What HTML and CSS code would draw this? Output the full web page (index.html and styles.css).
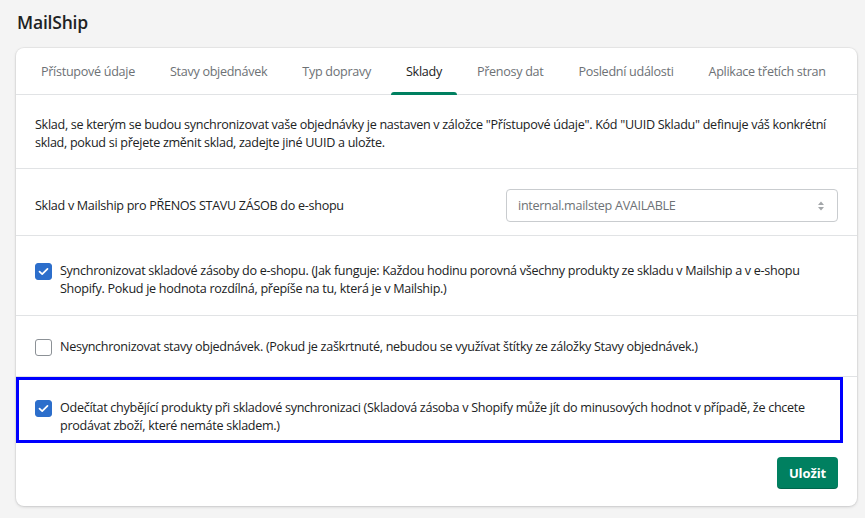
FILE: index.html
```html
<!DOCTYPE html>
<html lang="cs">
<head>
<meta charset="utf-8">
<title>MailShip</title>
<link rel="stylesheet" href="styles.css">
</head>
<body>
<div class="page">
  <h1 class="title">MailShip</h1>
  <div class="card">
    <nav class="tabs">
      <span class="tab">Přístupové údaje</span>
      <span class="tab">Stavy objednávek</span>
      <span class="tab">Typ dopravy</span>
      <span class="tab active">Sklady</span>
      <span class="tab">Přenosy dat</span>
      <span class="tab">Poslední události</span>
      <span class="tab">Aplikace třetích stran</span>
    </nav>
    <div class="section desc">
      <p>Sklad, se kterým se budou synchronizovat vaše objednávky je nastaven v záložce "Přístupové údaje". Kód "UUID Skladu" definuje váš konkrétní sklad, pokud si přejete změnit sklad, zadejte jiné UUID a uložte.</p>
    </div>
    <div class="section field">
      <span class="label">Sklad v Mailship pro PŘENOS STAVU ZÁSOB do e-shopu</span>
      <div class="select">
        <span>internal.mailstep AVAILABLE</span>
        <svg class="arrows" width="8" height="12" viewBox="0 0 8 12"><path d="M4 1.5 L7 5 H1 Z" fill="#a3a6a9"/><path d="M4 10.5 L7 7 H1 Z" fill="#a3a6a9"/></svg>
      </div>
    </div>
    <div class="section option opt1">
      <span class="cb checked"><svg width="11" height="9" viewBox="0 0 11 9"><path d="M1.5 4.6 L4.2 7.2 L9.5 1.8" fill="none" stroke="#fff" stroke-width="1.7" stroke-linecap="round" stroke-linejoin="round"/></svg></span>
      <p>Synchronizovat skladové zásoby do e-shopu. (Jak funguje: Každou hodinu porovná všechny produkty ze skladu v Mailship a v e-shopu Shopify. Pokud je hodnota rozdílná, přepíše na tu, která je v Mailship.)</p>
    </div>
    <div class="section option opt2">
      <span class="cb"></span>
      <p>Nesynchronizovat stavy objednávek. (Pokud je zaškrtnuté, nebudou se využívat štítky ze záložky Stavy objednávek.)</p>
    </div>
    <div class="section option opt3 highlight">
      <span class="cb checked"><svg width="11" height="9" viewBox="0 0 11 9"><path d="M1.5 4.6 L4.2 7.2 L9.5 1.8" fill="none" stroke="#fff" stroke-width="1.7" stroke-linecap="round" stroke-linejoin="round"/></svg></span>
      <p>Odečítat chybějící produkty při skladové synchronizaci (Skladová zásoba v Shopify může jít do minusových hodnot v případě, že chcete prodávat zboží, které nemáte skladem.)</p>
    </div>
    <div class="footer">
      <button class="btn">Uložit</button>
    </div>
  </div>
</div>
</body>
</html>
```
FILE: styles.css
```css
* { box-sizing: border-box; }
html, body { margin: 0; padding: 0; }
body {
  background: #f4f4f4;
  font-family: "Open Sans", "Noto Sans", sans-serif;
  color: #202223;
  font-size: 12.6px;
  letter-spacing: -0.3px;
}
.page { padding: 9px 8px 12px 16px; }
.title {
  margin: 0 0 13px 1px;
  font-size: 17.5px;
  font-weight: 600;
  line-height: 26px;
  letter-spacing: -0.2px;
  color: #202223;
}
.card {
  background: #fff;
  border-radius: 8px;
  box-shadow: 0 0 0 1px rgba(63,63,68,0.05), 0 1px 3px rgba(63,63,68,0.2);
}
.tabs {
  display: flex;
  gap: 5px;
  padding: 0 0 0 10px;
  height: 47px;
  border-bottom: 1px solid #e1e3e5;
}
.tab {
  position: relative;
  padding: 0 15px;
  line-height: 47px;
  color: #6d7175;
  white-space: nowrap;
}
.tab.active { color: #202223; }
.tab.active::after {
  content: "";
  position: absolute;
  left: 0; right: 0; bottom: -1px;
  height: 3px;
  background: #008060;
  border-radius: 3px 3px 0 0;
}
.section {
  padding: 0 19px;
  border-bottom: 1px solid #e1e3e5;
}
.section p { margin: 0; line-height: 18px; }
.desc { padding-top: 21px; padding-bottom: 16px; }
.field {
  display: flex;
  align-items: center;
  justify-content: space-between;
  padding-top: 20px;
  padding-bottom: 13px;
}
.select {
  width: 332px;
  height: 33px;
  border: 1px solid #c9cccf;
  border-radius: 4px;
  display: flex;
  align-items: center;
  justify-content: space-between;
  padding: 0 12px 0 11px;
  color: #6d7175;
}
.option {
  display: flex;
  align-items: flex-start;
  gap: 8px;
}
.opt1 { padding-top: 26px; padding-bottom: 17px; }
.opt2 { padding-top: 22px; padding-bottom: 20px; }
.opt3 { padding-top: 22px; padding-bottom: 8px; border-bottom: none; position: relative; }
.cb {
  flex: none;
  width: 17px;
  height: 17px;
  margin-top: 1px;
  border: 1px solid #8c9196;
  border-radius: 3px;
  background: #fff;
  display: flex;
  align-items: center;
  justify-content: center;
}
.cb.checked { background: #2c6ecb; border-color: #2c6ecb; }
.highlight::after {
  content: "";
  position: absolute;
  left: 0; right: 14px; top: 0; bottom: 0;
  border: 3px solid #0000ff;
  pointer-events: none;
}
.footer {
  display: flex;
  justify-content: flex-end;
  padding: 14px 19px 17px;
}
.btn {
  font-family: inherit;
  font-size: 13px;
  font-weight: 700;
  letter-spacing: -0.1px;
  color: #fff;
  background: #008060;
  border: none;
  border-radius: 4px;
  height: 32px;
  width: 61px;
  padding: 0;
  box-shadow: inset 0 -1px 0 rgba(0,0,0,0.2);
}
```
